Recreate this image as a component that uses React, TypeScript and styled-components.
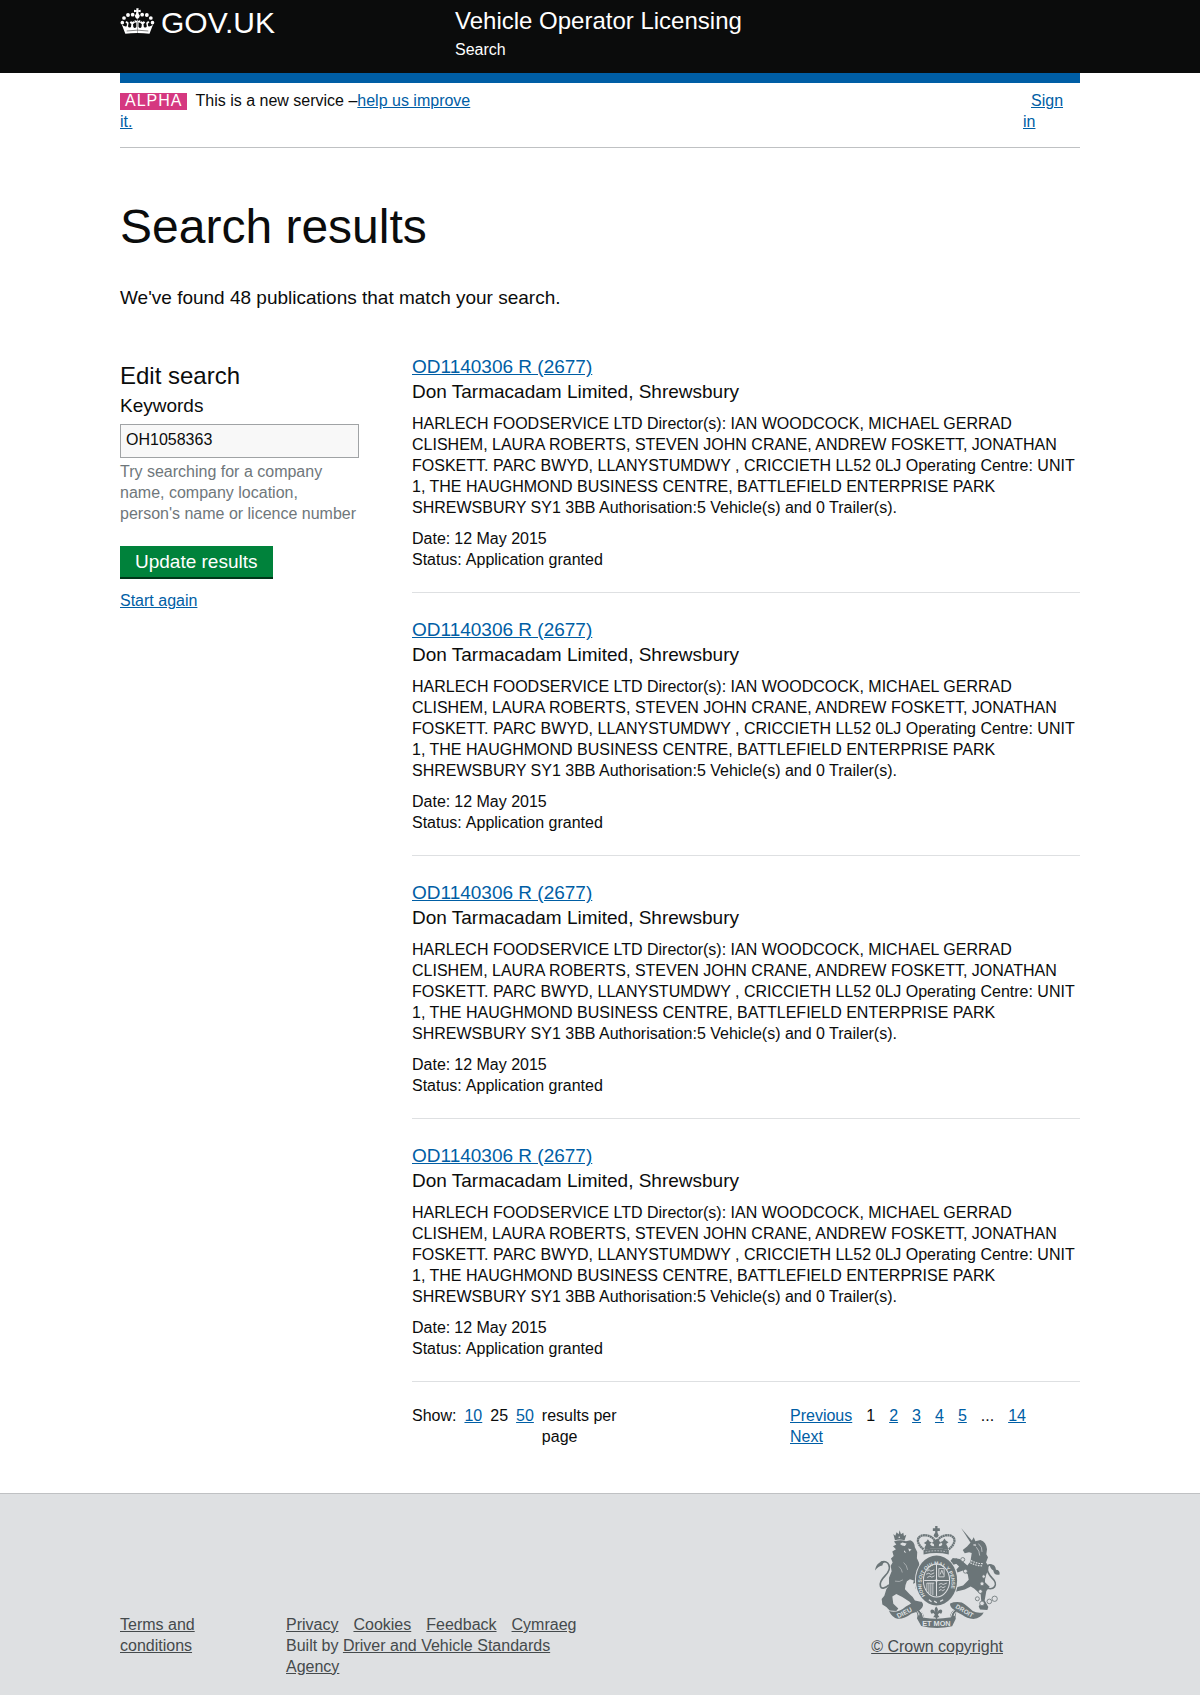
import React from "react";
import styled, { createGlobalStyle } from "styled-components";

const color = {
  ink: "#0b0c0c",
  link: "#005ea5",
  alpha: "#d53880",
  green: "#00823b",
  greenDark: "#003618",
  hint: "#6f777b",
  rule: "#dee0e2",
  ruleDark: "#bfc1c3",
  footer: "#dee0e2",
  footerText: "#454a4c",
  crest: "#6b7578",
};

const GlobalStyle = createGlobalStyle`
  html { background: ${color.footer}; }
  body {
    margin: 0;
    background: #fff;
    color: ${color.ink};
    font: 16px/21px "Liberation Sans", Helvetica, Arial, sans-serif;
  }
  h1, h2, h3, p, ul, dl, dd { margin: 0; padding: 0; font-weight: 400; }
  ul { list-style: none; }
  * { box-sizing: border-box; }
`;

const Wrapper = styled.div`
  max-width: 960px;
  margin: 0 auto;
`;

const Link = styled.a`
  color: ${color.link};
  text-decoration: underline;
`;

const FooterLink = styled(Link)`
  color: ${color.footerText};
`;

const Header = styled.header`
  background: ${color.ink};
  color: #fff;
`;

const HeaderInner = styled(Wrapper)`
  display: grid;
  grid-template-columns: 335px 1fr;
  padding: 6px 0 13px;
`;

const HomeLink = styled.a`
  display: flex;
  gap: 6px;
  align-items: flex-start;
  color: #fff;
  text-decoration: none;
  font-size: 30px;
  line-height: 33px;

  svg { margin-top: 2px; }
`;

const ServiceName = styled.p`
  font-size: 24px;
  line-height: 30px;
  margin-bottom: 3px;
`;

const PhaseBanner = styled(Wrapper)`
  display: flex;
  justify-content: space-between;
  border-top: 10px solid ${color.link};
  border-bottom: 1px solid ${color.ruleDark};
  padding: 7px 0 15px;
`;

const PhaseText = styled.p`
  width: 360px;
`;

const PhaseTag = styled.strong`
  display: inline-block;
  margin-right: 8px;
  padding: 0 5px 1px;
  background: ${color.alpha};
  color: #fff;
  font-weight: 400;
  line-height: 16px;
  letter-spacing: 1px;
`;

const SignIn = styled.nav`
  width: 48px;
  margin-right: 9px;

  a { margin-left: 8px; }
`;

const Main = styled(Wrapper).attrs({ as: "main" })`
  padding: 54px 0 46px;
`;

const PageTitle = styled.h1`
  font-size: 48px;
  line-height: 50px;
  margin-bottom: 33px;
`;

const Lede = styled.p`
  font-size: 19px;
  line-height: 25px;
`;

const Columns = styled.div`
  display: grid;
  grid-template-columns: 239px 1fr;
  column-gap: 53px;
  align-items: start;
  margin-top: 44px;
`;

const SearchForm = styled.form`
  display: flex;
  flex-direction: column;
  align-items: flex-start;
  padding-top: 7px;
`;

const FormTitle = styled.h2`
  font-size: 24px;
  line-height: 30px;
`;

const Label = styled.label`
  font-size: 19px;
  line-height: 25px;
  margin: 2px 0 6px;
`;

const TextInput = styled.input`
  width: 100%;
  height: 34px;
  padding: 4px 5px 6px;
  border: 1px solid #a0a3a5;
  border-radius: 0;
  background: #f8f8f8;
  color: ${color.ink};
  font: inherit;
`;

const Hint = styled.p`
  color: ${color.hint};
  margin: 3px 0 22px;
`;

const Submit = styled.button`
  padding: 3px 15px;
  border: 0;
  background: ${color.green};
  box-shadow: 0 2px 0 ${color.greenDark};
  color: #fff;
  font: inherit;
  font-size: 19px;
  line-height: 25px;
  margin-bottom: 13px;
`;

const Result = styled.li`
  border-bottom: 1px solid ${color.rule};
  padding-bottom: 22px;

  & + & { margin-top: 24px; }
`;

const ResultTitle = styled.h3`
  font-size: 19px;
  line-height: 25px;
`;

const Description = styled.p`
  margin: 9px 0 10px;
`;

const Fact = styled.div`
  display: flex;
  gap: 4px;
`;

const ResultsFooter = styled.div`
  display: flex;
  justify-content: space-between;
  margin-top: 23px;
`;

const PageSize = styled.div`
  display: flex;
  gap: 8px;
  width: 212px;
`;

const SizeList = styled.ul`
  display: flex;
  gap: 8px;
`;

const Pager = styled.ul`
  display: flex;
  flex-wrap: wrap;
  column-gap: 14px;
  width: 290px;
  padding-right: 40px;
`;

const Footer = styled.footer`
  border-top: 1px solid ${color.ruleDark};
  background: ${color.footer};
  color: ${color.footerText};
`;

const FooterInner = styled(Wrapper)`
  display: grid;
  grid-template-columns: 120px 300px 1fr;
  column-gap: 46px;
  align-items: start;
  padding: 31px 0 18px;
`;

const FooterColumn = styled.div`
  padding-top: 89px;
`;

const FooterLinks = styled.ul`
  display: flex;
  gap: 15px;
`;

const Copyright = styled.div`
  display: flex;
  flex-direction: column;
  align-items: center;
  justify-self: end;
  gap: 8px;
  margin-right: 77px;
`;

function CrownLogo() {
  const half = (
    <>
      <circle cx="67" cy="67" r="5.4" />
      <circle cx="72" cy="53" r="5.6" />
      <circle cx="84" cy="44" r="5.8" />
      <circle cx="98" cy="43" r="5.6" />
      <path d="M112 98Q92 98 76 100L65 72Q71 80 80 78L81 70L76 66L80 62L86 67L84 78Q86 84 93 80L94 71L89 67Q92 59 97 65Q102 60 104 67L99 72L100 80Q104 86 109 80L109 66L104 68L104 59L110 62L112 56Z" />
    </>
  );
  return (
    <svg width="35" height="27" viewBox="60 23 105 81" fill="#fff" aria-hidden="true">
      {half}
      <g transform="translate(224.5 0) scale(-1 1)">{half}</g>
      <path d="M109 24h7l-1 6 7-2v8l-7-2 1 7q6 4 2 10l-4 4h-4l-4-4q-4-6 2-10l1-7-7 2v-8l7 2z" />
      <path d="M80 92Q112 87 145 92" fill="none" stroke={color.ink} strokeWidth="1.5" />
    </svg>
  );
}

function CoatOfArms() {
  const bg = color.footer;
  return (
    <svg
      width="125"
      height="103"
      viewBox="44 45 376 310"
      fill={color.crest}
      fontFamily="Liberation Sans, Arial, sans-serif"
      fontWeight="700"
      aria-hidden="true"
    >
      {/* royal crown */}
      <path d="M225 48h7v7h7v8h-7v9h-7v-9h-7v-8h7z" />
      <circle cx="228" cy="76" r="7" />
      <g fill="none" stroke={color.crest} strokeWidth="7" strokeDasharray="6 1">
        <path d="M190 118C164 98 169 73 198 76C216 78 227 90 228 108" />
        <path d="M266 118C292 98 287 73 258 76C240 78 229 90 228 108" />
      </g>
      <path d="M193 113l5-9-7-5 8-5 4-6 5 7 7 3-6 4 6 6 7 1-1-7-6-3 6-6 8-6 8 6 6 6-6 3-1 7 7-1 4-6-6-6 7-3 5-7 4 6 8 5-7 5 5 9 1 9q-36-8-70 0z" />
      <path d="M190 120q38-10 76 0v14q-38-9-76 0z" />
      <path d="M196 126q32-7 64 0" fill="none" stroke={bg} strokeWidth="2" strokeDasharray="5 4" />

      {/* lion */}
      <path d="M99 72l6 5 4-10 6 6 3-12 4 12 7-5 2 10 7-4-5 17q-16-5-29 0z" />
      <circle cx="117" cy="82" r="2.5" fill={bg} />
      <path d="M101 95Q119 88 137 94L150 91Q163 96 164 112L171 126L170 145L176 158L180 180Q186 193 184 208L174 238L166 236L168 218L158 222L161 212L149 208L140 214Q134 226 134 238L149 254Q158 260 164 272L181 276L188 288L176 290L157 287L148 276L126 262L108 253L96 260L99 282L114 296L108 304L88 302L78 292L66 284L64 268L72 258L78 238L86 226L86 204L94 184L91 168L97 158L92 146L100 138L96 125L107 118L98 109L108 104Z" />
      <path d="M126 98l13 3-5 7q-10 0-15-6zM144 116l10 3-7 6zM132 121l6 8-7-3z" fill={bg} />
      <path d="M116 170q9 8 10 18M130 158q10 8 12 22M104 214q14 4 24-4" fill="none" stroke={bg} strokeWidth="1.5" />
      <path d="M86 225C58 251 50 222 74 198C99 173 84 148 62 158" fill="none" stroke={color.crest} strokeWidth="5" />
      <path d="M44 182q2-17 12-23 10-9 22-5-10 3-12 13-12 1-22 15z" />

      {/* unicorn */}
      <path d="M303 54l36 42-5 6z" />
      <path d="M333 96l8-14 5 12 15-4q18 6 20 28l-2 15 5 9-6 16q11 12 5 26-9 18-8 33l14 14-10 13-5 28 11 20-3 9-22-2-4-9 8-13-2-23-20-18-10-6-18 9-28 7-8 8-7-9 8-10 30-8 17-17-3-17-14-11-17 6-3-9 8-9-10-10-12 2-5-8 8-10 21 3 23 20 9-12 2-12 2-14-8-2-13 3-6-10 13-10z" />
      <path d="M275 156l13-11 22 12 13 18-8 5-13-12-13-6-14 4z" />
      <path d="M326 147q20 15 43 14M324 154q20 14 43 14" fill="none" stroke={bg} strokeWidth="3.5" strokeDasharray="5 3" />
      <path d="M340 105l6-2 1 5zM355 101q13 10 11 25M349 112q10 11 10 25" fill="none" stroke={bg} strokeWidth="2" />
      <path d="M369 230C404 248 417 224 396 204C374 181 380 157 397 168" fill="none" stroke={color.crest} strokeWidth="5" />
      <path d="M389 164q17-3 19 16 12 0 11 14-17 4-19-12-9-4-11-18z" />
      <g fill={bg} stroke={color.crest} strokeWidth="2.5">
        <circle cx="308" cy="149" r="6" />
        <circle cx="316" cy="184" r="6" />
        <circle cx="371" cy="200" r="5" />
        <circle cx="366" cy="222" r="6" />
        <circle cx="361" cy="245" r="6" />
        <circle cx="352" cy="267" r="6" />
        <circle cx="366" cy="281" r="7" />
        <circle cx="388" cy="275" r="7" />
        <circle cx="404" cy="267" r="8" />
      </g>

      {/* garter and shield */}
      <ellipse cx="229" cy="212" rx="65" ry="78" fill={bg} />
      <ellipse cx="229" cy="212" rx="62" ry="75" />
      <ellipse cx="229" cy="212" rx="41" ry="51" fill={bg} />
      <ellipse cx="229" cy="212" rx="38" ry="48" />
      <path id="garter" d="M195 258A45 56 0 1 1 263 258" fill="none" />
      <text fontSize="15" fill={bg}>
        <textPath href="#garter">HONI SOIT QUI MAL Y PENSE</textPath>
      </text>
      <path d="M229 165v94M192 212h74" stroke={bg} strokeWidth="3" />
      <g fill="none" stroke={bg} strokeWidth="2.5">
        <path d="M200 184l7-4 5 4 10-4M198 193l8-3 6 4 10-5M201 203l8-4 6 3 8-4" />
        <path d="M236 234l7-4 5 4 8-4M236 243l7-4 4 4 7-4M236 224l7-3 6 3 11-4" />
        <path d="M236 176h16v25h-16zM240 194l5-13 5 13" />
        <path d="M200 220v22M206 220v30M212 220v34M218 220v36M200 220h22" />
      </g>
      <circle cx="229" cy="212" r="4" fill={bg} />
      <path d="M206 270l8 6M222 274l8 5M240 275l9-5" stroke={bg} strokeWidth="4" />

      {/* motto scroll */}
      <path d="M86 304Q112 312 137 290L157 279L184 276Q192 283 186 293L178 302Q190 309 192 323L270 323Q270 306 283 301Q268 292 270 281Q284 275 305 278Q320 286 338 304Q352 312 371 308Q364 324 340 328Q320 326 307 316L290 307Q285 313 287 327L276 350Q228 360 183 349L170 326Q174 314 168 307L154 311Q132 328 112 327Q96 325 86 304Z" />
      <path d="M192 324q-2-18 6-23l6-8h50l8 8q5 5 8 22-38 8-78 1z" fill={bg} />
      <path d="M178 302q10 7 12 22M283 301q-9 7-12 22M170 305q8 4 6 12M290 307q-8 2-8 12" fill="none" stroke={bg} strokeWidth="3" />
      <text x="186" y="348" fontSize="22" fill={bg}>ET MON</text>
      <text x="114" y="326" fontSize="20" fill={bg} transform="rotate(-27 114 326)">DIEU</text>
      <text x="285" y="294" fontSize="19" fill={bg} transform="rotate(31 285 294)">DROIT</text>
      <path d="M228 290q9 9 3 18 6-12 13-8 5 5-1 12l-6-2-4 5 5 8h-5l-4 7-4-7h-6l5-8-4-5-6 2q-6-7-1-12 7-4 13 8-6-9 2-18z" />
    </svg>
  );
}

const publications = Array.from({ length: 4 }, (_, id) => ({
  id,
  reference: "OD1140306 R (2677)",
  operator: "Don Tarmacadam Limited, Shrewsbury",
  description:
    "HARLECH FOODSERVICE LTD Director(s): IAN WOODCOCK, MICHAEL GERRAD CLISHEM, LAURA ROBERTS, STEVEN JOHN CRANE, ANDREW FOSKETT, JONATHAN FOSKETT. PARC BWYD, LLANYSTUMDWY , CRICCIETH LL52 0LJ Operating Centre: UNIT 1, THE HAUGHMOND BUSINESS CENTRE, BATTLEFIELD ENTERPRISE PARK SHREWSBURY SY1 3BB Authorisation:5 Vehicle(s) and 0 Trailer(s).",
  date: "12 May 2015",
  status: "Application granted",
}));

const pages = ["Previous", "1", "2", "3", "4", "5", "...", "14", "Next"];
const sizes = ["10", "25", "50"];

export default function App() {
  return (
    <>
      <GlobalStyle />
      <Header>
        <HeaderInner>
          <HomeLink href="#">
            <CrownLogo />
            GOV.UK
          </HomeLink>
          <div>
            <ServiceName>Vehicle Operator Licensing</ServiceName>
            <p>Search</p>
          </div>
        </HeaderInner>
      </Header>

      <PhaseBanner>
        <PhaseText>
          <PhaseTag>ALPHA</PhaseTag>
          This is a new service –<Link href="#">help us improve it.</Link>
        </PhaseText>
        <SignIn>
          <Link href="#">Sign in</Link>
        </SignIn>
      </PhaseBanner>

      <Main>
        <PageTitle>Search results</PageTitle>
        <Lede>We've found 48 publications that match your search.</Lede>

        <Columns>
          <SearchForm onSubmit={(event) => event.preventDefault()}>
            <FormTitle>Edit search</FormTitle>
            <Label htmlFor="keywords">Keywords</Label>
            <TextInput
              id="keywords"
              type="text"
              defaultValue="OH1058363"
              aria-describedby="keywords-hint"
            />
            <Hint id="keywords-hint">
              Try searching for a company name, company location, person's name or licence number
            </Hint>
            <Submit type="submit">Update results</Submit>
            <Link href="#">Start again</Link>
          </SearchForm>

          <section>
            <ul>
              {publications.map((item) => (
                <Result key={item.id}>
                  <ResultTitle>
                    <Link href="#">{item.reference}</Link>
                  </ResultTitle>
                  <Lede>{item.operator}</Lede>
                  <Description>{item.description}</Description>
                  <dl>
                    <Fact>
                      <dt>Date:</dt>
                      <dd>{item.date}</dd>
                    </Fact>
                    <Fact>
                      <dt>Status:</dt>
                      <dd>{item.status}</dd>
                    </Fact>
                  </dl>
                </Result>
              ))}
            </ul>

            <ResultsFooter>
              <PageSize>
                <span>Show:</span>
                <SizeList>
                  {sizes.map((size) => (
                    <li key={size}>{size === "25" ? size : <Link href="#">{size}</Link>}</li>
                  ))}
                </SizeList>
                <span>results per page</span>
              </PageSize>
              <nav aria-label="Pagination">
                <Pager>
                  {pages.map((page) => (
                    <li key={page}>
                      {page === "1" || page === "..." ? page : <Link href="#">{page}</Link>}
                    </li>
                  ))}
                </Pager>
              </nav>
            </ResultsFooter>
          </section>
        </Columns>
      </Main>

      <Footer>
        <FooterInner>
          <FooterColumn>
            <FooterLink href="#">Terms and conditions</FooterLink>
          </FooterColumn>
          <FooterColumn>
            <FooterLinks>
              {["Privacy", "Cookies", "Feedback", "Cymraeg"].map((name) => (
                <li key={name}>
                  <FooterLink href="#">{name}</FooterLink>
                </li>
              ))}
            </FooterLinks>
            <p>
              Built by <FooterLink href="#">Driver and Vehicle Standards Agency</FooterLink>
            </p>
          </FooterColumn>
          <Copyright>
            <CoatOfArms />
            <FooterLink href="#">© Crown copyright</FooterLink>
          </Copyright>
        </FooterInner>
      </Footer>
    </>
  );
}
